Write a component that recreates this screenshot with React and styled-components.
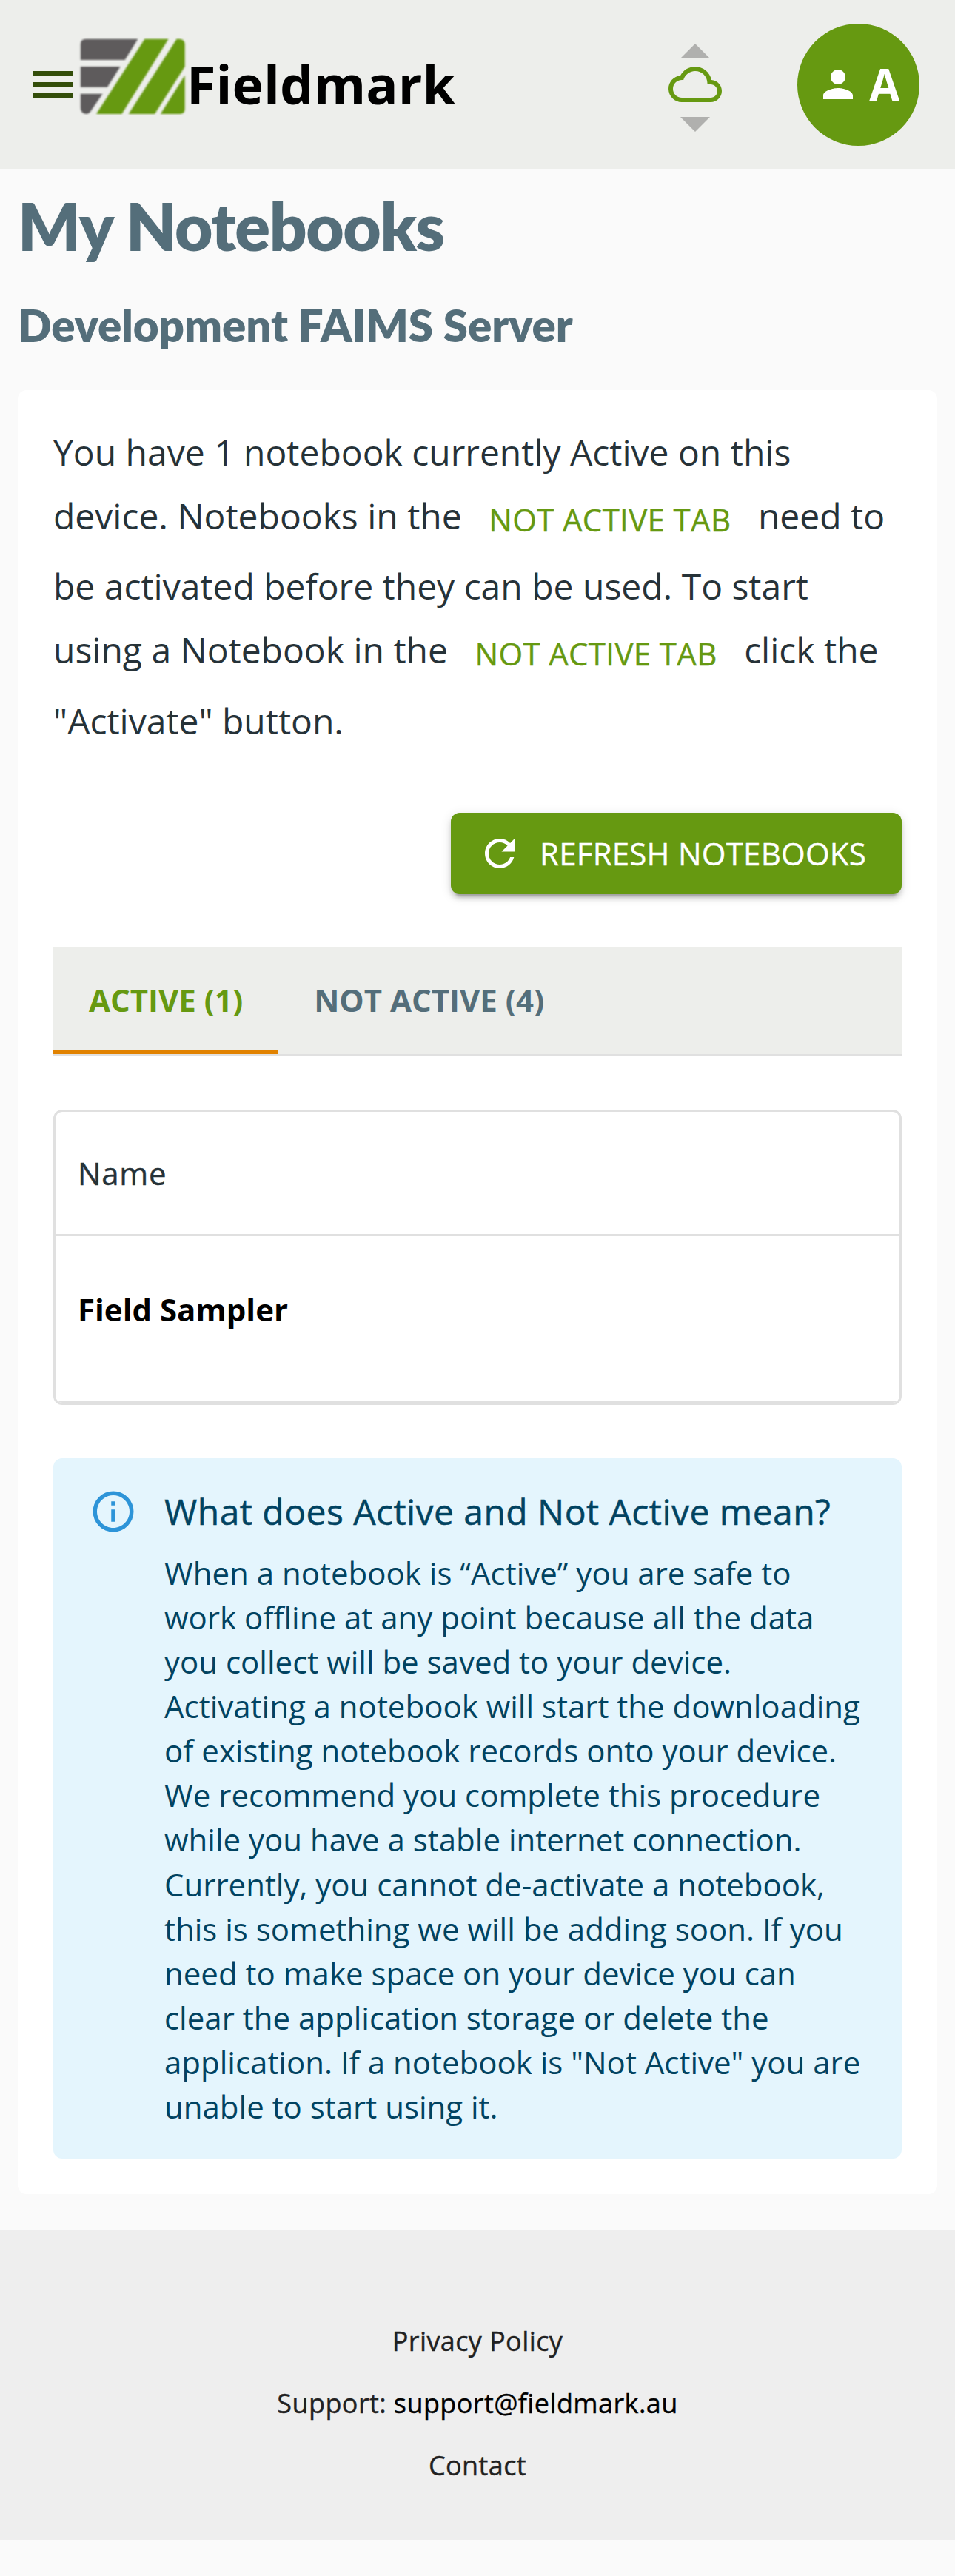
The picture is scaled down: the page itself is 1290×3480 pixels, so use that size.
import React from 'react';
import styled, { createGlobalStyle } from 'styled-components';

const GlobalStyle = createGlobalStyle`
  *, *::before, *::after { box-sizing: border-box; }
  body {
    margin: 0;
    background: #fafafa;
    color: rgba(0, 0, 0, 0.87);
    font-family: 'Open Sans', 'Noto Sans', sans-serif;
    font-size: 48px;
    line-height: 1.5;
  }
`;

const Page = styled.div`
  width: 1290px;
  height: 3480px;
`;

const AppBar = styled.header`
  display: flex;
  align-items: center;
  height: 228px;
  padding: 0 48px 0 36px;
  background: #edeeeb;
`;

const Icon = styled.svg`
  display: block;
  flex: none;
  width: ${(p) => p.$size}px;
  height: ${(p) => p.$size}px;
  fill: ${(p) => p.$color || 'currentColor'};
`;

const Logo = styled.svg`
  display: block;
  flex: none;
  width: 143px;
  height: 120px;
  margin-top: -12px;
  filter: blur(1px);
`;

const Brand = styled.div`
  padding: 0 0 2.5px 1px;
  color: #000;
  font-size: 72px;
  font-weight: 700;
  line-height: 1;
`;

const SyncStatus = styled.div`
  display: flex;
  flex-direction: column;
  align-items: center;
  width: 96px;
  margin-left: auto;
  padding-top: 8.67px;
`;

const SyncArrow = styled(Icon)`
  margin: ${(p) => (p.$up ? '0 0 -40.67px' : '-31.8px 0 0')};
`;

const UserChip = styled.div`
  display: flex;
  align-items: center;
  gap: 12px;
  width: 165px;
  height: 165px;
  margin-left: 90px;
  padding-left: 25px;
  border-radius: 50%;
  background: #669911;
  color: #fff;
  font-size: 60px;
  font-weight: 700;
`;

const Main = styled.main`
  padding: 0 24px;
`;

const Title = styled.h1`
  margin: 0;
  padding-top: 25px;
  height: 159px;
  color: #546e7a;
  font: 800 88.6px/105px Lato, sans-serif;
  letter-spacing: -0.01562em;
`;

const Subtitle = styled.h2`
  margin: 0;
  padding-top: 14.5px;
  height: 139.5px;
  color: #546e7a;
  font: 800 60px/74px Lato, sans-serif;
  letter-spacing: -0.05px;
`;

const Card = styled.section`
  padding: 48px;
  height: 2437.5px;
  border-radius: 12px;
  background: #fff;
`;

const Intro = styled.p`
  margin: 0 0 88.5px;
  color: #263238;
  font-size: 48px;
  line-height: 72px;
`;

const Button = styled.button`
  display: inline-flex;
  align-items: center;
  justify-content: center;
  height: 109.5px;
  vertical-align: middle;
  border: 0;
  border-radius: 12px;
  font: 500 42px/73.5px 'Open Sans', sans-serif;
  letter-spacing: ${(p) => (p.$filled ? 0.23 : 0.35)}px;
  -webkit-text-stroke: 0.4px currentColor;
  text-transform: uppercase;
  padding: ${(p) => (p.$filled ? '0 48px 0 36px' : '0 24px')};
  gap: 24px;
  background: ${(p) => (p.$filled ? '#669911' : 'transparent')};
  color: ${(p) => (p.$filled ? '#fff' : '#669911')};
  box-shadow: ${(p) =>
    p.$filled
      ? '0 9px 3px -6px rgba(0,0,0,.2), 0 6px 6px 0 rgba(0,0,0,.14), 0 3px 15px 0 rgba(0,0,0,.12)'
      : 'none'};
`;

const Actions = styled.div`
  display: flex;
  justify-content: flex-end;
  margin-bottom: 72px;
`;

const Tabs = styled.div`
  display: flex;
  height: 147px;
  margin-bottom: 72px;
  background: #edeeeb;
  border-bottom: 3px solid #e0e0e0;
`;

const Tab = styled.div`
  display: flex;
  align-items: center;
  padding: ${(p) => (p.$active ? '6px 48px 0' : '0 48px')};
  border-bottom: ${(p) => (p.$active ? '6px solid #e18200' : '0')};
  color: ${(p) => (p.$active ? '#669911' : '#546e7a')};
  font-size: 42px;
  font-weight: 700;
  line-height: 52.5px;
`;

const Grid = styled.div`
  margin-bottom: 72px;
  border: 3px solid #e0e0e0;
  border-radius: 12px;
  overflow: hidden;
`;

const GridRow = styled.div`
  display: flex;
  align-items: center;
  height: ${(p) => (p.$head ? 168 : 225)}px;
  padding: ${(p) => (p.$head ? '1px 30px 0' : '0 30px 24px')};
  border-bottom: 3px solid #e0e0e0;
  color: ${(p) => (p.$head ? '#263238' : '#000')};
  font-size: 42px;
  font-weight: ${(p) => (p.$head ? 500 : 700)};
  line-height: 60px;
  letter-spacing: ${(p) => (p.$head ? 0.7 : 0)}px;
  -webkit-text-stroke: ${(p) => (p.$head ? '0.4px' : '0')} currentColor;
`;

const Alert = styled.aside`
  display: flex;
  gap: 36px;
  height: 946.5px;
  padding: 18px 48px;
  border-radius: 12px;
  background: #e4f5fd;
  color: #014361;
`;

const AlertIcon = styled.div`
  padding: 21px 0;
`;

const AlertBody = styled.div`
  padding: 24px 0;
  font-size: 42px;
  line-height: 60.06px;
`;

const AlertTitle = styled.div`
  margin: -6px 0 17.6px;
  font-size: 48px;
  font-weight: 500;
  line-height: 72px;
  letter-spacing: 0.46px;
  -webkit-text-stroke: 0.5px currentColor;
`;

const Footer = styled.footer`
  display: flex;
  flex-direction: column;
  align-items: center;
  gap: 24px;
  height: 420px;
  margin-top: 48px;
  padding-top: 121px;
  background: #eee;
  color: #212121;
  font-size: 36px;
  font-weight: 500;
  line-height: 60px;
  letter-spacing: 0.4px;
  -webkit-text-stroke: 0.4px currentColor;
`;

const Mail = styled.a`
  color: #000;
  -webkit-text-stroke: 0.4px #000;
`;

const paths = {
  menu: 'M3 18h18v-2H3v2zm0-5h18v-2H3v2zm0-7v2h18V6H3z',
  up: 'M7 14l5-5 5 5z',
  down: 'M7 10l5 5 5-5z',
  cloud:
    'M19.35 10.04C18.67 6.59 15.64 4 12 4 9.11 4 6.6 5.64 5.35 8.04 2.34 8.36 0 10.91 0 14c0 3.31 2.69 6 6 6h13c2.76 0 5-2.24 5-5 0-2.64-2.05-4.78-4.65-4.96zM19 18H6c-2.21 0-4-1.79-4-4s1.79-4 4-4h.71C7.37 7.69 9.48 6 12 6c3.04 0 5.5 2.46 5.5 5.5v.5H19c1.66 0 3 1.34 3 3s-1.34 3-3 3z',
  person:
    'M12 12c2.21 0 4-1.79 4-4s-1.79-4-4-4-4 1.79-4 4 1.79 4 4 4zm0 2c-2.67 0-8 1.34-8 4v2h16v-2c0-2.66-5.33-4-8-4z',
  refresh:
    'M17.65 6.35C16.2 4.9 14.21 4 12 4c-4.42 0-7.99 3.58-7.99 8s3.57 8 7.99 8c3.73 0 6.84-2.55 7.73-6h-2.08c-.82 2.33-3.04 4-5.65 4-3.31 0-6-2.69-6-6s2.69-6 6-6c1.66 0 3.14.69 4.22 1.78L13 11h7V4l-2.35 2.35z',
  info: 'M11,9H13V7H11M12,20C7.59,20 4,16.41 4,12C4,7.59 7.59,4 12,4C16.41,4 20,7.59 20,12C20,16.41 16.41,20 12,20M12,2A10,10 0 0,0 2,12A10,10 0 0,0 12,22A10,10 0 0,0 22,12A10,10 0 0,0 12,2M11,17H13V11H11V17Z',
};

function FieldmarkLogo() {
  return (
    <Logo viewBox="0 0 143 120">
      <g fill="#5e5b5c">
        <path d="M8 4.7H78.3L60.7 33H0.8V12Q0.8 4.7 8 4.7Z" />
        <path d="M0.8 42H54.5L37 69.7H0.8Z" />
        <path d="M0.8 78.7H30.6L14 103Q12 106 9 106Q0.8 105 0.8 98Z" />
      </g>
      <g fill="#669911">
        <path d="M87.4 4.7H119.5L56.5 106H22Z" />
        <path d="M130.6 4.7H134Q141.7 5 141.7 12V42L101 106H65.6Z" />
        <path d="M141.7 53.7V99Q141.7 106 135 106H108.8Z" />
      </g>
    </Logo>
  );
}

export default function App() {
  return (
    <Page>
      <GlobalStyle />
      <AppBar>
        <Icon viewBox="0 0 24 24" $size={72} $color="#334d0a">
          <path d={paths.menu} />
        </Icon>
        <FieldmarkLogo />
        <Brand>Fieldmark</Brand>
        <SyncStatus>
          <SyncArrow viewBox="0 0 24 24" $size={96} $color="#b0b0ae" $up>
            <path d={paths.up} />
          </SyncArrow>
          <Icon viewBox="0 0 24 24" $size={72} $color="#669911">
            <path d={paths.cloud} />
          </Icon>
          <SyncArrow viewBox="0 0 24 24" $size={96} $color="#b0b0ae">
            <path d={paths.down} />
          </SyncArrow>
        </SyncStatus>
        <UserChip>
          <Icon viewBox="0 0 24 24" $size={60}>
            <path d={paths.person} />
          </Icon>
          A
        </UserChip>
      </AppBar>

      <Main>
        <Title>My Notebooks</Title>
        <Subtitle>Development FAIMS Server</Subtitle>
        <Card>
          <Intro>
            You have 1 notebook currently Active on this device. Notebooks in the{' '}
            <Button>Not Active tab</Button> need to be activated before they can be used. To
            start using a Notebook in the <Button>Not Active tab</Button> click the "Activate"
            button.
          </Intro>
          <Actions>
            <Button $filled>
              <Icon viewBox="0 0 24 24" $size={60}>
                <path d={paths.refresh} />
              </Icon>
              Refresh Notebooks
            </Button>
          </Actions>
          <Tabs>
            <Tab $active>ACTIVE (1)</Tab>
            <Tab>NOT ACTIVE (4)</Tab>
          </Tabs>
          <Grid>
            <GridRow $head>Name</GridRow>
            <GridRow>Field Sampler</GridRow>
          </Grid>
          <Alert>
            <AlertIcon>
              <Icon viewBox="0 0 24 24" $size={66} $color="#2d94d8">
                <path d={paths.info} />
              </Icon>
            </AlertIcon>
            <AlertBody>
              <AlertTitle>What does Active and Not Active mean?</AlertTitle>
              When a notebook is “Active” you are safe to work offline at any point because all
              the data you collect will be saved to your device. Activating a notebook will
              start the downloading of existing notebook records onto your device. We recommend
              you complete this procedure while you have a stable internet connection.
              Currently, you cannot de-activate a notebook, this is something we will be adding
              soon. If you need to make space on your device you can clear the application
              storage or delete the application. If a notebook is "Not Active" you are unable
              to start using it.
            </AlertBody>
          </Alert>
        </Card>
      </Main>

      <Footer>
        <div>Privacy Policy</div>
        <div>
          Support: <Mail>support@fieldmark.au</Mail>
        </div>
        <div>Contact</div>
      </Footer>
    </Page>
  );
}
